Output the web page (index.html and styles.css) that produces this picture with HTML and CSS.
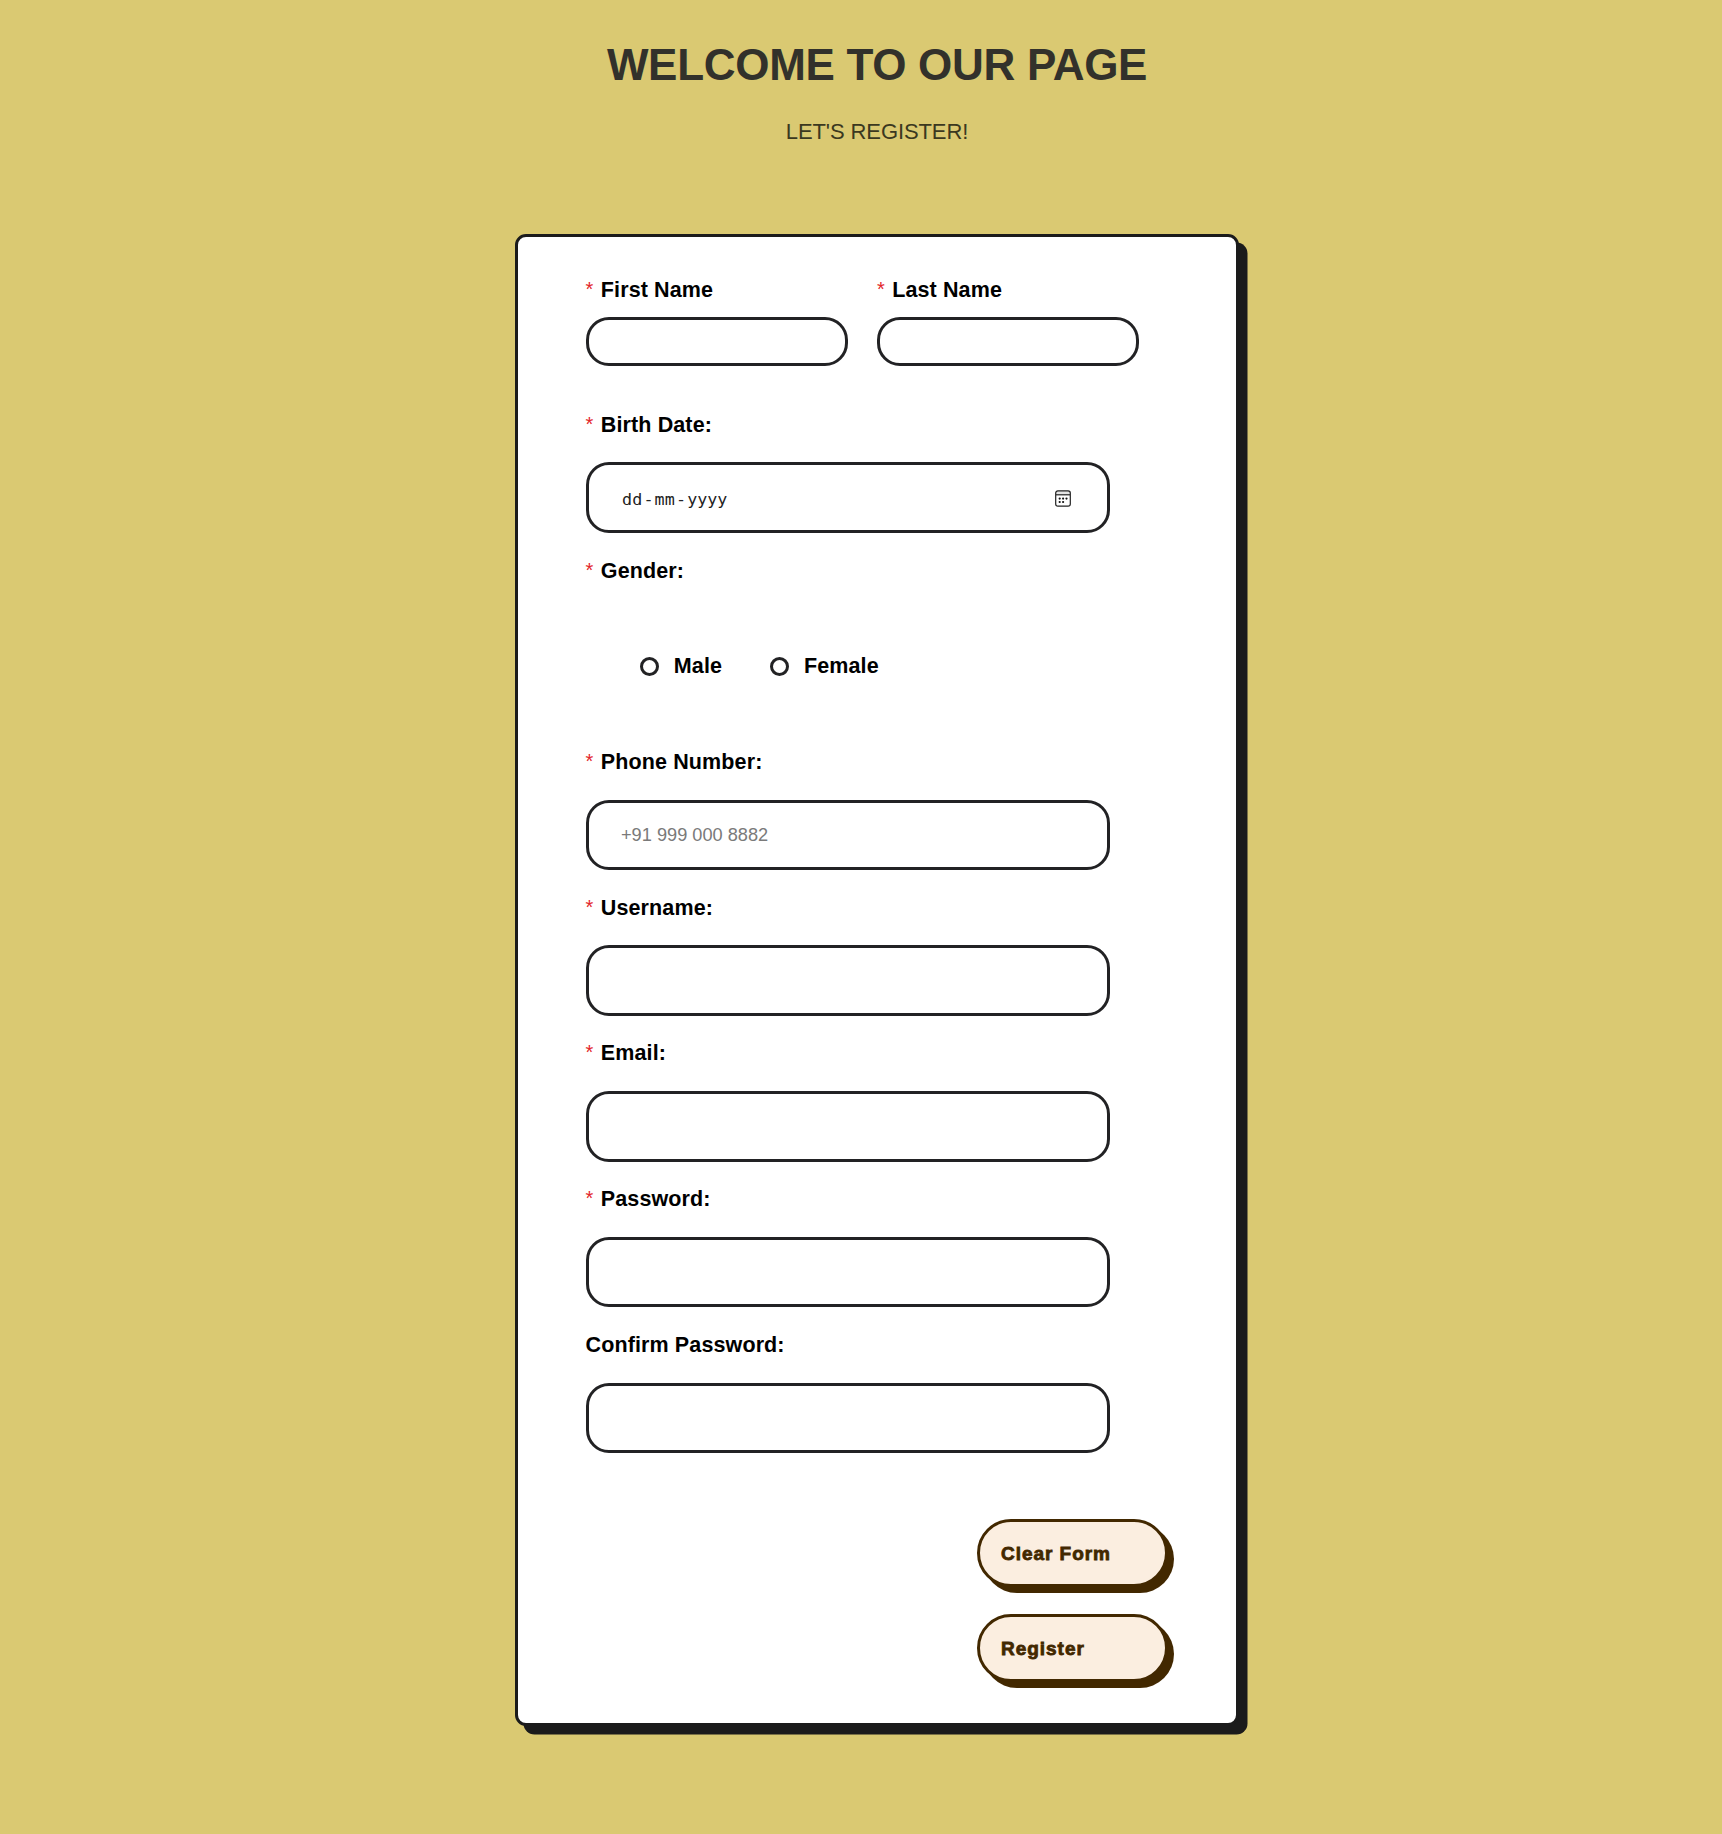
FILE: index.html
```html
<!DOCTYPE html>
<html lang="en">
<head>
<meta charset="utf-8">
<title>Registration</title>
<link rel="stylesheet" href="styles.css">
</head>
<body>
<main class="page">
  <h1 class="title">WELCOME TO OUR PAGE</h1>
  <p class="subtitle">LET'S REGISTER!</p>
  <form class="card">
    <div class="names">
      <div class="field">
        <label class="label" for="first"><span class="req">*</span>First Name</label>
        <input class="input small" id="first" type="text">
      </div>
      <div class="field">
        <label class="label" for="last"><span class="req">*</span>Last Name</label>
        <input class="input small" id="last" type="text">
      </div>
    </div>
    <div class="field">
      <span class="label"><span class="req">*</span>Birth Date:</span>
      <div class="input date">
        <span class="date-text"><span>dd</span><span>-</span><span>mm</span><span>-</span><span>yyyy</span></span>
        <svg class="calendar" viewBox="0 0 16 17" width="16" height="17">
          <rect x="1" y="1" width="14" height="4" fill="#e4e4e4"/>
          <rect x=".7" y=".8" width="14.6" height="15.4" rx="2.2" fill="none" stroke="#222" stroke-width="1.2"/>
          <path d="M1 4.8h14" stroke="#222" stroke-width="1.2"/>
          <g fill="#111"><circle cx="4.7" cy="8.6" r="1.1"/><circle cx="8.1" cy="8.6" r="1.1"/><circle cx="11.5" cy="8.6" r="1.1"/><circle cx="4.7" cy="12" r="1.1"/><circle cx="8.1" cy="12" r="1.1"/></g>
        </svg>
      </div>
    </div>
    <div class="gender">
      <span class="label"><span class="req">*</span>Gender:</span>
      <div class="options">
        <label class="option"><input class="radio" type="radio" name="gender">Male</label>
        <label class="option"><input class="radio" type="radio" name="gender">Female</label>
      </div>
    </div>
    <div class="fields">
      <div class="field">
        <label class="label" for="phone"><span class="req">*</span>Phone Number:</label>
        <input class="input" id="phone" type="tel" placeholder="+91 999 000 8882">
      </div>
      <div class="field">
        <label class="label" for="user"><span class="req">*</span>Username:</label>
        <input class="input" id="user" type="text">
      </div>
      <div class="field">
        <label class="label" for="email"><span class="req">*</span>Email:</label>
        <input class="input" id="email" type="email">
      </div>
      <div class="field">
        <label class="label" for="pass"><span class="req">*</span>Password:</label>
        <input class="input" id="pass" type="password">
      </div>
      <div class="field">
        <label class="label" for="confirm">Confirm Password:</label>
        <input class="input" id="confirm" type="password">
      </div>
    </div>
    <div class="actions">
      <button class="button" type="reset">Clear Form</button>
      <button class="button" type="button">Register</button>
    </div>
  </form>
</main>
</body>
</html>
```
FILE: styles.css
```css
* { box-sizing: border-box; }

body {
  margin: 0;
  background: #dac972;
  font-family: "Liberation Sans", Arial, sans-serif;
}

.page {
  display: flex;
  flex-direction: column;
  align-items: center;
  min-height: 1834px;
  padding: 40px 0 0 32px;
}

.title {
  margin: 0;
  color: #32312b;
  font-size: 44px;
  line-height: 50px;
  letter-spacing: -0.3px;
}

.subtitle {
  margin: 29px 0 90px;
  color: #3b381f;
  font-size: 22px;
  line-height: 25px;
  letter-spacing: -0.1px;
}

.card {
  width: 724px;
  height: 1492px;
  padding: 41.2px 67.5px 0;
  border: 3px solid #1b1b1b;
  border-radius: 11px;
  background: #fff;
  box-shadow: 8.5px 8.5px 0 #1b1b1b;
}

.names {
  display: flex;
  gap: 29px;
  margin-bottom: 46.8px;
}

.field {
  display: flex;
  flex-direction: column;
  gap: 25.7px;
}

.names .field {
  width: 262.4px;
  gap: 14.8px;
}

.label,
.option {
  display: flex;
  height: 24px;
  color: #000;
  font-size: 21.5px;
  font-weight: 700;
  line-height: 25px;
  letter-spacing: 0.12px;
  white-space: nowrap;
}

.req {
  width: 15.3px;
  color: #e3262b;
  font-size: 20px;
  font-weight: 400;
  line-height: 23px;
}

.input {
  width: 524.5px;
  height: 70.4px;
  margin-bottom: 0.3px;
  padding: 0 32.5px;
  border: 3px solid #222224;
  border-radius: 23px;
  background: #fff;
  font-family: inherit;
  font-size: 18.2px;
}

.input::placeholder { color: #7a7a7a; }

.small {
  width: 100%;
  height: 48.7px;
}

.date {
  display: flex;
  align-items: center;
  justify-content: space-between;
  padding: 2px 36px 0 33.6px;
}

.date-text {
  display: flex;
  gap: 1.2px;
  color: #222;
  font-family: "DejaVu Sans Mono", monospace;
  font-size: 16.7px;
}

.gender { margin: 26px 0 71.7px; }

.options {
  display: flex;
  gap: 48.1px;
  padding: 71.3px 0 0 54.5px;
}

.option {
  align-items: center;
  gap: 14.8px;
  line-height: 26px;
}

.radio {
  appearance: none;
  width: 19px;
  height: 19px;
  margin: 0;
  border: 3px solid #222224;
  border-radius: 50%;
}

.fields {
  display: flex;
  flex-direction: column;
  gap: 25.3px;
}

.actions {
  display: flex;
  flex-direction: column;
  align-items: flex-end;
  gap: 27px;
  padding: 66px 0.4px 0 0;
}

.button {
  width: 191px;
  height: 68px;
  padding: 2px 21px 0;
  border: 3px solid #422800;
  border-radius: 36px;
  background: #fbeee0;
  box-shadow: 6px 6px 0 #422800;
  color: #422800;
  font-family: inherit;
  font-size: 19px;
  font-weight: 700;
  letter-spacing: 0.95px;
  text-align: left;
  -webkit-text-stroke: 0.8px #422800;
}
```
